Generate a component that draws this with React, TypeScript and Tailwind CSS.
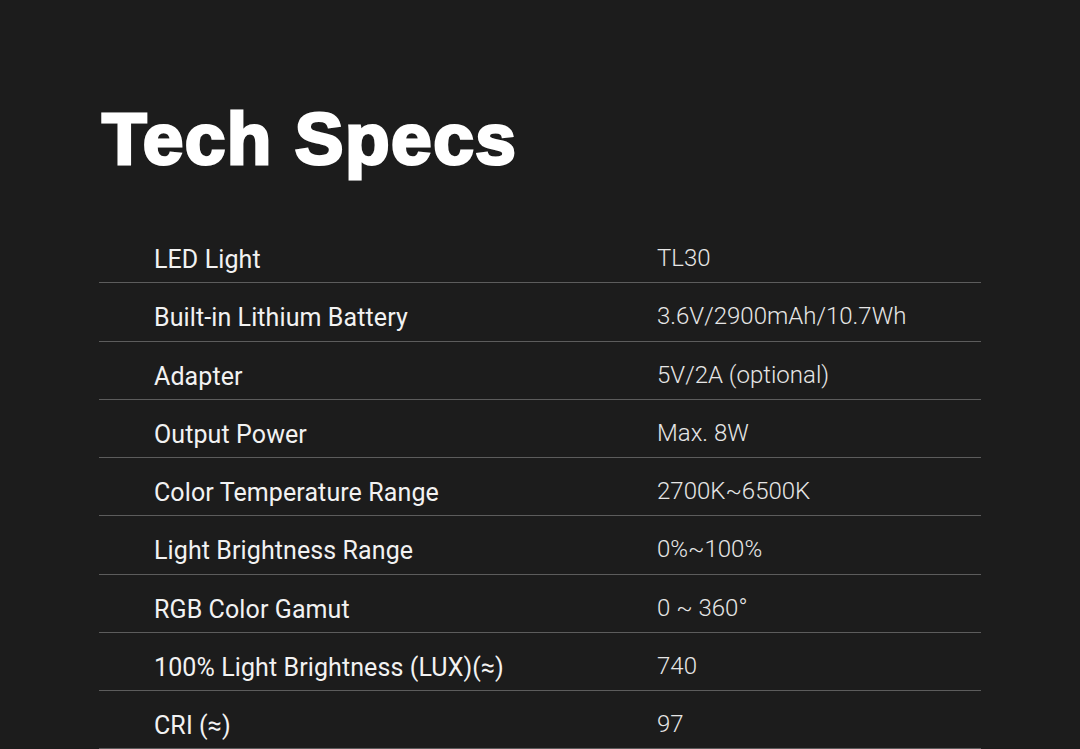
const specs: [string, string][] = [
  ["LED Light", "TL30"],
  ["Built-in Lithium Battery", "3.6V/2900mAh/10.7Wh"],
  ["Adapter", "5V/2A (optional)"],
  ["Output Power", "Max. 8W"],
  ["Color Temperature Range", "2700K~6500K"],
  ["Light Brightness Range", "0%~100%"],
  ["RGB Color Gamut", "0 ~ 360°"],
  ["100% Light Brightness (LUX)(≈)", "740"],
  ["CRI (≈)", "97"],
];

export default function App() {
  return (
    <div className="min-h-screen w-full bg-[#1c1c1c] text-white">
      <div className="ml-[99px] w-[882px] pt-[102px]">
        <h1 className="pl-[3px] font-['Liberation_Sans',Arial,sans-serif] text-[73px] font-bold leading-[74px] tracking-[1.5px] text-white [-webkit-text-stroke:3px_#ffffff]">
          Tech Specs
        </h1>
        <div className="mt-[49px]">
          {specs.map(([label, value]) => (
            <div
              key={label}
              className="grid grid-cols-[558px_1fr] border-b border-[#5c5c5c] pt-[21px] pb-[8.25px]"
            >
              <div className="pl-[55px] font-[Roboto] text-[25px] leading-[28px] font-normal tracking-[0.1px] text-[#f2f2f2]">
                {label}
              </div>
              <div className="-mt-[2px] font-[Roboto] text-[24px] leading-[28px] font-light text-[#e6e6e6]">
                {value}
              </div>
            </div>
          ))}
        </div>
      </div>
    </div>
  );
}
